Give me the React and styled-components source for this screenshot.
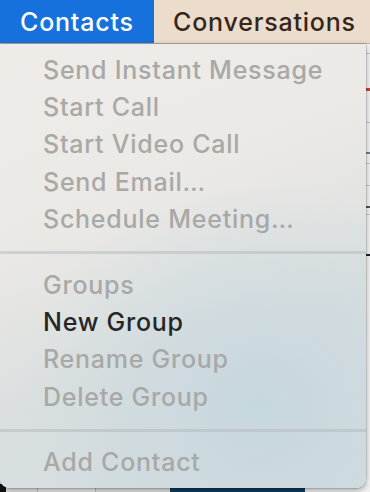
import React from "react";
import styled, { createGlobalStyle } from "styled-components";

const Global = createGlobalStyle`
  html, body { margin: 0; padding: 0; }
  body { width: 370px; height: 492px; overflow: hidden; background: #f4f4f4;
    font-family: Inter, "Liberation Sans", sans-serif; }
`;

const Page = styled.div`
  width: 370px;
  height: 492px;
  display: flex;
  flex-direction: column;
  overflow: hidden;
`;

const MenuBar = styled.div`
  display: flex;
  height: 43px;
  flex: none;
  background: #ecdccb;
  border-bottom: 1px solid #bdb7b0;
`;

const BarItem = styled.div`
  display: flex;
  align-items: center;
  padding: 0 0 0 ${(p) => p.$pad}px;
  font-size: 25px;
  font-weight: 500;
  letter-spacing: 0.8px;
  color: ${(p) => (p.$active ? "#ffffff" : "#35261a")};
  background: ${(p) => (p.$active ? "#1671dc" : "transparent")};
  width: ${(p) => p.$w}px;
  box-sizing: border-box;
  white-space: nowrap;
`;

const Stage = styled.div`
  position: relative;
  flex: 1;
`;

const BackWindow = styled.div`
  position: absolute;
  inset: 0;
  background: #f6f6f6;
`;

const BackLine = styled.div`
  position: absolute;
  right: 0;
  width: 6px;
  height: ${(p) => p.$h || 1}px;
  top: ${(p) => p.$y}px;
  background: ${(p) => p.$c || "#c8c8c8"};
`;

const BottomStrip = styled.div`
  position: absolute;
  left: 0;
  right: 0;
  bottom: 0;
  height: 8px;
  display: flex;
  background: #e9e9e9;
`;

const StripCell = styled.div`
  width: ${(p) => p.$w}px;
  background: ${(p) => p.$c};
  border-right: ${(p) => (p.$b ? "1px solid #b9b9b9" : "none")};
  box-sizing: border-box;
`;

const Menu = styled.div`
  position: absolute;
  top: 0;
  left: 0;
  width: 366px;
  height: 444px;
  box-sizing: border-box;
  padding: 7px 0;
  border-radius: 0 0 9px 9px;
  background:
    radial-gradient(ellipse 240px 220px at 260px 360px, rgba(196, 214, 222, 0.85), rgba(196, 214, 222, 0) 100%),
    linear-gradient(160deg, #efece8 0%, #ebe9e6 35%, #dadfdf 65%, #d3dde0 100%);
  box-shadow: 0 2px 6px rgba(0, 0, 0, 0.35), 0 0 0 0.5px rgba(0, 0, 0, 0.2);
  display: flex;
  flex-direction: column;
`;

const Item = styled.div`
  height: 37.4px;
  display: flex;
  align-items: center;
  padding-left: 43px;
  font-size: 25px;
  font-weight: 500;
  letter-spacing: 0.75px;
  white-space: nowrap;
  color: ${(p) => (p.$enabled ? "#262626" : "#a8a8a6")};
`;

const Separator = styled.div`
  height: 28px;
  display: flex;
  align-items: center;
  padding-top: 2px;
  box-sizing: border-box;
  &::after {
    content: "";
    flex: 1;
    height: 3px;
    background: rgba(175, 180, 182, 0.45);
  }
`;

const sections = [
  [
    ["Send Instant Message"],
    ["Start Call"],
    ["Start Video Call"],
    ["Send Email…"],
    ["Schedule Meeting…"],
  ],
  [["Groups"], ["New Group", true], ["Rename Group"], ["Delete Group"]],
  [["Add Contact"]],
];

export default function App() {
  return (
    <Page>
      <Global />
      <MenuBar>
        <BarItem $active $w={154} $pad={20}>Contacts</BarItem>
        <BarItem $w={216} $pad={19}>Conversations</BarItem>
      </MenuBar>
      <Stage>
        <BackWindow>
          <BackLine $y={9} />
          <BackLine $y={44} $h={3} $c="#d0423a" />
          <BackLine $y={78} />
          <BackLine $y={108} $h={2} $c="#6f7f94" />
          <BackLine $y={119} />
          <BackLine $y={141} />
          <BackLine $y={162} $h={2} $c="#555" />
          <BackLine $y={170} />
          <BackLine $y={210} $h={2} $c="#1b1f2a" />
          <BottomStrip>
            <StripCell $w={6} $c="#111" />
            <StripCell $w={32} $c="#e4e4e4" $b />
            <StripCell $w={58} $c="#e9e9e9" $b />
            <StripCell $w={74} $c="#e2e2e2" />
            <StripCell $w={135} $c="#0e3a5c" />
            <StripCell $w={65} $c="#f1f1f1" />
          </BottomStrip>
        </BackWindow>
        <Menu>
          {sections.map((sec, i) => (
            <React.Fragment key={i}>
              {i > 0 && <Separator />}
              {sec.map(([label, enabled]) => (
                <Item key={label} $enabled={enabled}>
                  {label}
                </Item>
              ))}
            </React.Fragment>
          ))}
        </Menu>
      </Stage>
    </Page>
  );
}
